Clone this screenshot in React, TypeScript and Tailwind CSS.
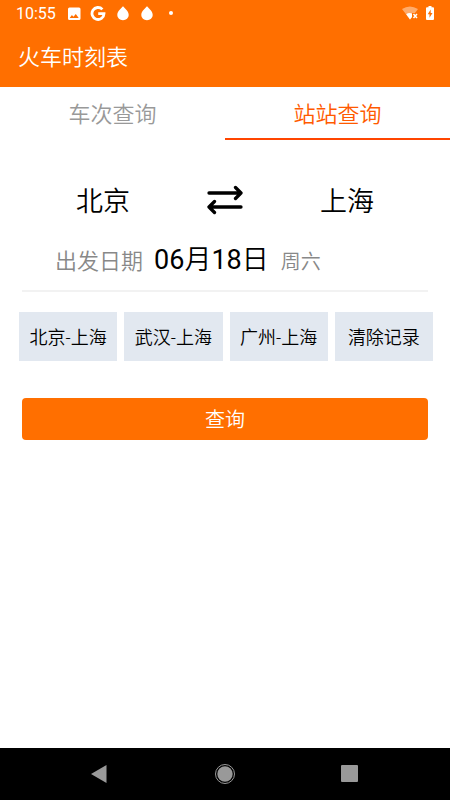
import { useState } from 'react';

const font = "font-['Roboto','Noto_Sans_CJK_SC',sans-serif]";

function DropIcon() {
  return (
    <svg className="h-4 w-3" viewBox="0 0 12 16" fill="#fff" aria-hidden="true">
      <path d="M6 .2C7.800 2.200 11.700 5.200 11.700 8.800C11.700 12 9.200 14.200 6 14.200S.3 12 .3 8.800C.3 5.200 4.200 2.200 6 .2Z" />
    </svg>
  );
}

function StatusBar() {
  return (
    <div className="flex h-7 items-center justify-between pr-4 pl-4 text-white">
      <div className="flex items-center">
        <span className="w-[51px] text-[16px] leading-7 font-normal">10:55</span>
        <svg className="h-4 w-4" viewBox="0 0 16 16" aria-hidden="true">
          <path fill="#fff" fillRule="evenodd" d="M2.500 1.500H12Q13.500 1.500 13.500 3V12.500Q13.500 14 12 14H2.500Q1 14 1 12.500V3Q1 1.500 2.500 1.500ZM2.700 12H11.700L8.800 7.900L6.500 10.800L4.900 8.900Z" />
        </svg>
        <svg className="ml-[7px] h-4 w-4" viewBox="0 0 16 16" aria-hidden="true">
          <path d="M12.400 3.400A6 6 0 1 0 14 7.700H8.200" fill="none" stroke="#fff" strokeWidth="2.800" />
        </svg>
        <span className="ml-[11px] flex gap-3">
          <DropIcon />
          <DropIcon />
        </span>
        <span className="mb-0.5 ml-4 h-1 w-1 rounded-full bg-white" />
      </div>
      <div className="flex items-center gap-2">
        <svg className="h-4 w-4" viewBox="0 0 16 16" aria-hidden="true">
          <path d="M0 3Q7.800-2 16 3L13 7H10V11L8 13.500Z" fill="#fff" fillOpacity=".42" />
          <path d="M4.200 8.200Q7 6 10 7.500V11L8 13.500Z" fill="#fff" />
          <path d="M11.500 8L15 12M15 8L11.500 12" stroke="#fff" strokeWidth="1.500" />
        </svg>
        <svg className="h-4 w-2" viewBox="0 0 8 16" aria-hidden="true">
          <path d="M2.500 0H5.500V1.300H7Q8 1.300 8 2.300V13Q8 14 7 14H1Q0 14 0 13V2.300Q0 1.300 1 1.300H2.500Z" fill="#fff" />
          <path d="M4.700 3.500L1.700 8.300H3.500V11.800L6.500 7H4.700Z" fill="#ff6f00" />
        </svg>
      </div>
    </div>
  );
}

function SwapIcon() {
  return (
    <svg className="h-[30px] w-9" viewBox="0 0 36 30" fill="none" stroke="#000" strokeWidth="3.300" strokeLinecap="round" strokeLinejoin="round" aria-hidden="true">
      <path d="M2 8H34M28.500 2.500L34 8L28.500 13.500M34 22H2M7.500 16.500L2 22L7.500 27.500" />
    </svg>
  );
}

export default function App() {
  const [tab, setTab] = useState(1);
  const [route, setRoute] = useState(['北京', '上海']);
  const [history, setHistory] = useState([
    ['北京', '上海'],
    ['武汉', '上海'],
    ['广州', '上海'],
  ]);
  const chip = 'h-[49px] bg-[#e2e8f0] pt-0.5 text-[18px] text-black whitespace-nowrap';

  return (
    <div className={`flex min-h-screen flex-col bg-white font-[350] text-black ${font}`} lang="zh-CN">
      <header className="bg-[#ff6f00] text-white">
        <StatusBar />
        <h1 className="h-[59px] pl-[18px] text-[22px] leading-[60px] font-[350]">火车时刻表</h1>
      </header>

      <nav className="grid h-[53px] grid-cols-2 text-[22px]">
        {['车次查询', '站站查询'].map((name, i) => (
          <button
            key={name}
            onClick={() => setTab(i)}
            className={
              tab === i
                ? 'border-b-2 border-[#ff4500] pt-1 text-[#ff5a00]'
                : 'border-b-2 border-transparent pt-1 text-[#999]'
            }
          >
            {name}
          </button>
        ))}
      </nav>

      <main className="flex-1">
        <section className="mx-[22px] border-b-2 border-[#f2f2f2] pt-[38px]">
          <div className="grid grid-cols-3 items-center px-5 text-[27px]">
            <button className="pt-1 text-center leading-10">{route[0]}</button>
            <button
              className="flex justify-center"
              aria-label="交换出发站和到达站"
              onClick={() => setRoute([route[1], route[0]])}
            >
              <SwapIcon />
            </button>
            <button className="pt-1 text-center leading-10">{route[1]}</button>
          </div>
          <button className="mt-[18px] flex h-[50px] w-full items-baseline pl-[33px] text-left">
            <span className="text-[22px] leading-10 text-[#888]">出发日期</span>
            <span className="ml-[11px] text-[27px] leading-10">
              <span className="font-normal">06</span>月<span className="font-normal">18</span>日
            </span>
            <span className="ml-3 text-[20px] leading-10 text-[#888]">周六</span>
          </button>
        </section>

        <div className="mr-[17px] ml-[19px] grid grid-cols-4 gap-[7px] pt-5">
          {history.map((pair) => (
            <button key={pair[0]} className={chip} onClick={() => setRoute(pair)}>
              {pair.join('-')}
            </button>
          ))}
          <button className={chip} onClick={() => setHistory([])}>
            清除记录
          </button>
        </div>

        <div className="px-[22px] pt-[37px]">
          <button className="h-[42px] w-full rounded bg-[#ff6f00] pt-0.5 text-[20px] text-white">查询</button>
        </div>
      </main>

      <footer className="flex h-[52px] items-center justify-between bg-black px-[88px]">
        <button aria-label="返回">
          <svg className="h-[22px] w-[22px]" viewBox="0 0 22 22" aria-hidden="true">
            <path d="M3 11L18.500 2V20Z" fill="#999" />
          </svg>
        </button>
        <button aria-label="主屏幕">
          <svg className="h-[22px] w-[22px]" viewBox="0 0 22 22" aria-hidden="true">
            <circle cx="11" cy="11" r="9.500" fill="none" stroke="#999" />
            <circle cx="11" cy="11" r="7.700" fill="#999" />
          </svg>
        </button>
        <button aria-label="最近任务">
          <svg className="h-[22px] w-[22px]" viewBox="0 0 22 22" aria-hidden="true">
            <rect x="1" y="2" width="17" height="17" rx="1" fill="#999" />
          </svg>
        </button>
      </footer>
    </div>
  );
}
